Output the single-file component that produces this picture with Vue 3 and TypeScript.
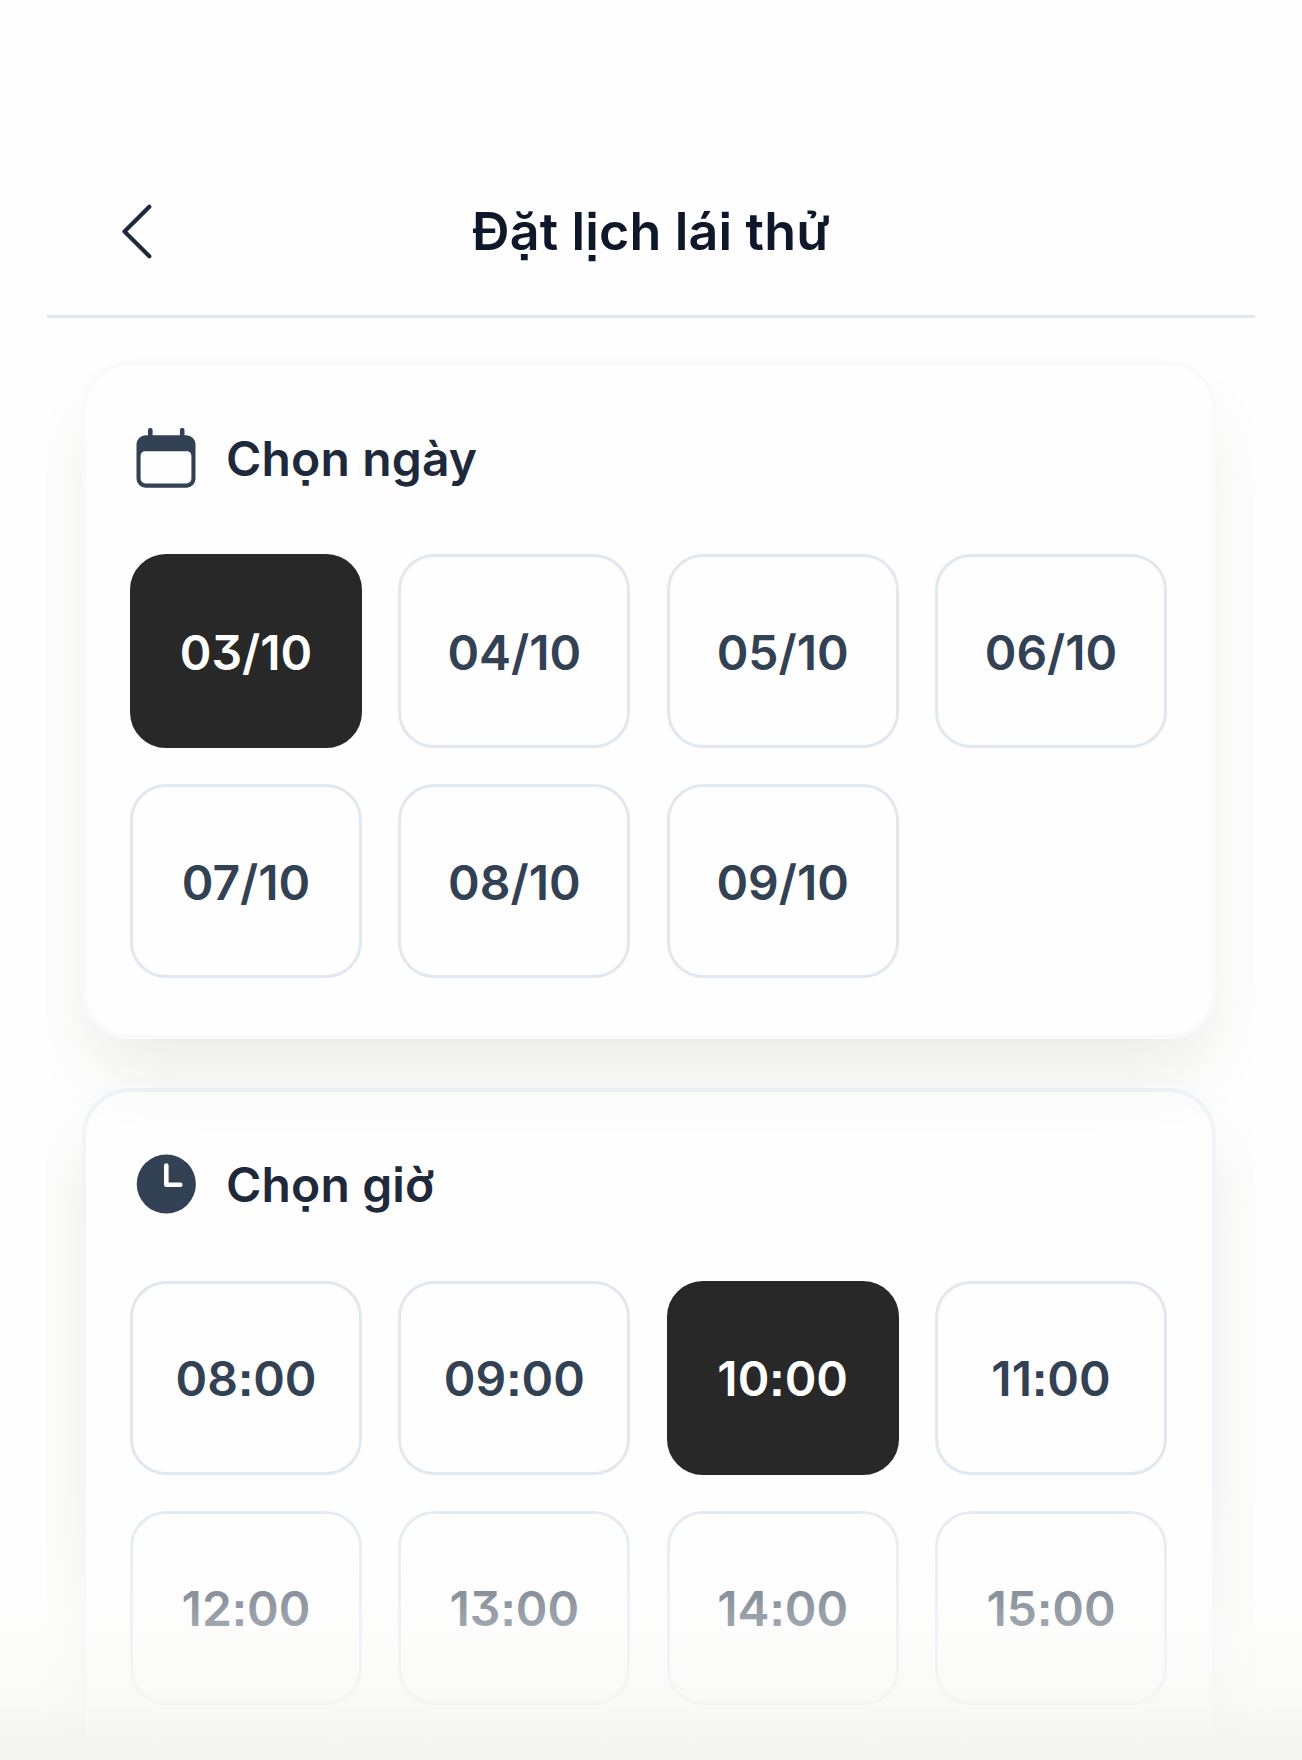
<script setup lang="ts">
import { ref } from 'vue'

const dates: string[] = ['03/10', '04/10', '05/10', '06/10', '07/10', '08/10', '09/10']
const times: string[] = [
  '08:00', '09:00', '10:00', '11:00',
  '12:00', '13:00', '14:00', '15:00',
  '', '', '', '',
]
const selectedDate = ref('03/10')
const selectedTime = ref('10:00')
</script>

<template>
  <div class="page">
    <main class="screen">
      <header class="header">
        <svg class="back" width="64" height="64" viewBox="0 0 64 64" fill="none">
          <path d="M44.3 7.800 19.500 32.600l24.800 24.600" stroke="#1e293b" stroke-width="4.2" stroke-linecap="round" stroke-linejoin="round" />
        </svg>
        <h1>Đặt lịch lái thử</h1>
        <span class="spacer"></span>
      </header>

      <section class="card card-date">
        <div class="heading">
          <svg width="60" height="60" viewBox="0 0 60 60">
            <path d="M14.3 2.2v8M46.2 2.2v8" stroke="#334155" stroke-width="4.6" stroke-linecap="round" />
            <path fill="#334155" fill-rule="evenodd" d="M9.5 7.3h41a9 9 0 0 1 9 9v34.400a9 9 0 0 1-9 9h-41a9 9 0 0 1-9-9V16.300a9 9 0 0 1 9-9ZM9 23.300a4.400 4.400 0 0 0-4.400 4.400v22.800a4.900 4.900 0 0 0 4.900 4.900h41a4.900 4.900 0 0 0 4.900-4.900V27.700a4.400 4.400 0 0 0-4.400-4.400Z" />
          </svg>
          <h2>Chọn ngày</h2>
        </div>
        <div class="grid">
          <button
            v-for="d in dates"
            :key="d"
            type="button"
            class="tile"
            :class="{ active: d === selectedDate }"
            @click="selectedDate = d"
          >{{ d }}</button>
        </div>
      </section>

      <section class="card card-time">
        <div class="heading">
          <svg width="60" height="60" viewBox="0 0 60 60" fill="none">
            <circle cx="30.300" cy="30" r="29.600" fill="#334155" />
            <path d="M30.300 11.500v19.300h14" stroke="#fff" stroke-width="4.600" stroke-linecap="round" stroke-linejoin="round" />
          </svg>
          <h2>Chọn giờ</h2>
        </div>
        <div class="grid">
          <button
            v-for="(t, i) in times"
            :key="i"
            type="button"
            class="tile time"
            :class="{ active: t !== '' && t === selectedTime }"
            @click="selectedTime = t"
          >{{ t }}</button>
        </div>
      </section>
    </main>
    <div class="fade"></div>
  </div>
</template>

<style>
body {
  margin: 0;
  background: #fefefe;
}
</style>

<style scoped>
.page {
  position: relative;
  width: 1302px;
  height: 1760px;
  overflow: hidden;
  background: #fefefe;
  font-family: Inter, "Noto Sans", sans-serif;
  font-feature-settings: "ss07", "cv09";
}
.screen {
  box-sizing: border-box;
  width: 1208px;
  height: 1760px;
  margin-left: 47px;
  padding-top: 146px;
  overflow: hidden;
}
.header {
  box-sizing: border-box;
  display: flex;
  align-items: center;
  justify-content: space-between;
  height: 172px;
  padding: 0 58px;
  border-bottom: 3px solid #e2e8f0;
}
.back,
.spacer {
  width: 64px;
  height: 64px;
}
h1 {
  margin: 0;
  padding-top: 3px;
  font-size: 52px;
  font-weight: 600;
  line-height: 64px;
  letter-spacing: 0.15px;
  color: #0f172a;
  white-space: nowrap;
}
.card {
  box-sizing: border-box;
  width: 1134px;
  margin-left: 35px;
  padding: 63px 44px 0;
  border: 4px solid #f8fafc;
  border-radius: 48px;
  background: #fefefe;
  box-shadow: 0 42px 72px -14px rgba(60, 60, 25, 0.1);
}
.card-date {
  position: relative;
  z-index: 1;
  height: 678px;
  margin-top: 43px;
}
.card-time {
  height: 900px;
  margin-top: 49px;
  padding-top: 62px;
  border-color: #f1f5f9;
  box-shadow: 0 42px 72px -6px rgba(60, 60, 25, 0.1);
}
.heading {
  display: flex;
  align-items: center;
  height: 60px;
  padding-left: 6px;
}
h2 {
  margin: 0 0 0 30px;
  padding-top: 2px;
  font-size: 48px;
  font-weight: 600;
  line-height: 60px;
  letter-spacing: 0.15px;
  color: #1e293b;
  white-space: nowrap;
}
.grid {
  display: grid;
  grid-template-columns: repeat(4, 232px);
  grid-auto-rows: 194px;
  gap: 36px 36.330px;
  margin-top: 66px;
}
.card-time .grid {
  margin-top: 67px;
}
.tile {
  display: flex;
  align-items: center;
  justify-content: center;
  box-sizing: border-box;
  padding: 3px 0 0;
  border: 3px solid #e2e8f0;
  border-radius: 36px;
  background: transparent;
  font: 600 48px/60px Inter, "Noto Sans", sans-serif;
  font-feature-settings: "ss07", "cv09";
  color: #334155;
}
.tile.time {
  padding-top: 1px;
  font-feature-settings: "ss07", "cv09", "calt" 0;
}
.tile.active {
  border-color: #282828;
  background: #282828;
  color: #fff;
}
.fade {
  position: absolute;
  inset: auto 0 0;
  z-index: 2;
  height: 285px;
  pointer-events: none;
  background: linear-gradient(
    rgba(254, 254, 254, 0),
    rgba(254, 254, 254, 0.15) 36px,
    rgba(253, 253, 253, 0.42) 116px,
    rgba(252, 252, 251, 0.54) 151px,
    rgba(248, 248, 247, 0.82) 230px,
    rgba(243, 243, 242, 1) 285px
  );
}
</style>
